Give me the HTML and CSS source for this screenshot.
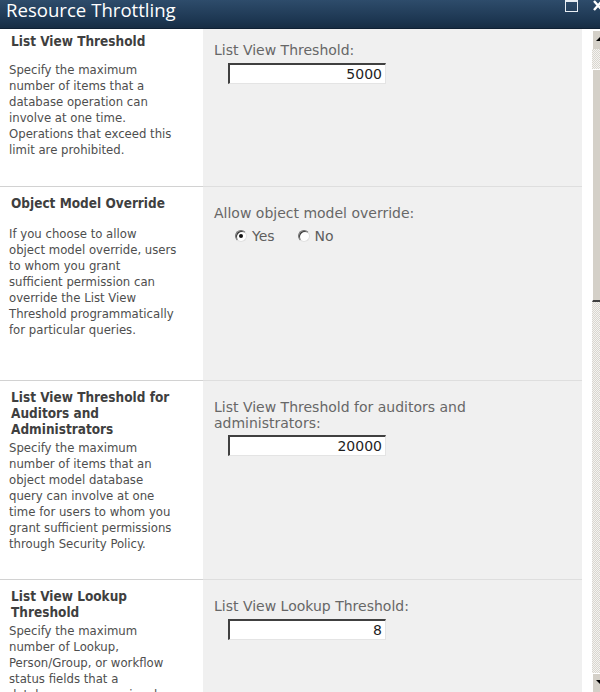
FILE: index.html
```html
<!DOCTYPE html>
<html>
<head>
<meta charset="utf-8">
<link rel="stylesheet" href="styles.css">
</head>
<body>
<div class="window">
  <div class="titlebar">
    <span class="title">Resource Throttling</span>
    <div class="controls">
      <span class="restore"></span>
      <svg class="close" width="12" height="12" viewBox="0 0 12 12"><path d="M2 1 L10 10 M10 1 L2 10" stroke="#fff" stroke-width="2.4" fill="none"/></svg>
    </div>
  </div>
  <div class="body">
    <div class="content">
      <div class="row first r1">
        <div class="left">
          <div class="heading">List View Threshold</div>
          <div class="desc spaced">Specify the maximum<br>number of items that a<br>database operation can<br>involve at one time.<br>Operations that exceed this<br>limit are prohibited.</div>
        </div>
        <div class="right">
          <div class="label">List View Threshold:</div>
          <div class="field"><span class="input">5000</span></div>
        </div>
      </div>
      <div class="row r2">
        <div class="left">
          <div class="heading">Object Model Override</div>
          <div class="desc spaced">If you choose to allow<br>object model override, users<br>to whom you grant<br>sufficient permission can<br>override the List View<br>Threshold programmatically<br>for particular queries.</div>
        </div>
        <div class="right">
          <div class="label">Allow object model override:</div>
          <div class="radios">
            <span class="option"><span class="radio checked"></span>Yes</span>
            <span class="option"><span class="radio"></span>No</span>
          </div>
        </div>
      </div>
      <div class="row r3">
        <div class="left">
          <div class="heading">List View Threshold for<br>Auditors and<br>Administrators</div>
          <div class="desc">Specify the maximum<br>number of items that an<br>object model database<br>query can involve at one<br>time for users to whom you<br>grant sufficient permissions<br>through Security Policy.</div>
        </div>
        <div class="right">
          <div class="label">List View Threshold for auditors and<br>administrators:</div>
          <div class="field"><span class="input">20000</span></div>
        </div>
      </div>
      <div class="row r4">
        <div class="left">
          <div class="heading">List View Lookup<br>Threshold</div>
          <div class="desc">Specify the maximum<br>number of Lookup,<br>Person/Group, or workflow<br>status fields that a<br>database query can involve<br>at one time.</div>
        </div>
        <div class="right">
          <div class="label">List View Lookup Threshold:</div>
          <div class="field"><span class="input">8</span></div>
        </div>
      </div>
    </div>
    <div class="spacer"></div>
    <div class="scrollbar">
      <div class="sb-btn up"><span class="tri-up"></span></div>
      <div class="sb-track top"></div>
      <div class="sb-thumb"></div>
      <div class="sb-track bottom"></div>
      <div class="sb-btn down"><span class="tri-down"></span></div>
    </div>
  </div>
</div>
</body>
</html>
```
FILE: styles.css
```css
html, body {
  margin: 0;
  padding: 0;
  background: #ffffff;
}
.window {
  width: 600px;
  height: 692px;
  overflow: hidden;
  display: flex;
  flex-direction: column;
}
.titlebar {
  height: 29px;
  flex: none;
  background: linear-gradient(#2e4c6b, #1d3752 70%, #172d44);
  border-bottom: 1px solid #0f2033;
  display: flex;
  justify-content: space-between;
  align-items: flex-start;
  box-sizing: border-box;
}
.title {
  font-family: "Open Sans", "DejaVu Sans", sans-serif;
  font-size: 18.6px;
  line-height: 20px;
  color: #ffffff;
  padding-left: 6px;
}
.controls {
  display: flex;
  align-items: flex-start;
  gap: 14px;
  margin-right: -4px;
}
.restore {
  width: 11px;
  height: 9px;
  border: 1px solid #e8eef4;
  border-top-width: 2px;
  margin-top: 0;
  display: block;
}
.close {
  display: block;
}
.body {
  flex: 1;
  display: flex;
  min-height: 0;
}
.content {
  width: 582px;
  flex: none;
  display: flex;
  flex-direction: column;
  overflow: hidden;
}
.row {
  display: grid;
  grid-template-columns: 203px 1fr;
  flex: none;
}
.r1 { height: 157px; }
.r2 { height: 194px; }
.r3 { height: 199px; }
.r4 { height: 120px; }
.left {
  background: #ffffff;
  padding: 8px 0 0 9px;
  border-top: 1px solid #d2d2d2;
  box-sizing: border-box;
  overflow: hidden;
}
.right {
  background: #f0f0f0;
  padding: 18px 0 0 11px;
  border-top: 1px solid #dedede;
  box-sizing: border-box;
}
.first .left { padding-top: 4px; border-top: 0; }
.first .right { padding-top: 13px; border-top: 0; }
.heading {
  font-family: "DejaVu Sans Condensed", "DejaVu Sans", sans-serif;
  font-weight: bold;
  font-size: 13.5px;
  line-height: 16px;
  color: #3f3f3f;
  padding-left: 2px;
}
.desc {
  font-family: "DejaVu Sans Condensed", "DejaVu Sans", sans-serif;
  font-size: 13px;
  line-height: 16px;
  color: #4e4e4e;
  margin-top: 3px;
  white-space: nowrap;
}
.desc.spaced { margin-top: 13px; }
.r2 .desc.spaced { margin-top: 15px; }
.label {
  font-family: "DejaVu Sans", Verdana, sans-serif;
  font-size: 14px;
  line-height: 16px;
  color: #676767;
  white-space: nowrap;
}
.field {
  padding: 5px 0 0 14px;
}
.r3 .field { padding-top: 4px; }
.input {
  display: block;
  width: 158px;
  height: 21px;
  box-sizing: border-box;
  background: #ffffff;
  border-style: solid;
  border-width: 2px 1px 1px 2px;
  border-color: #404040 #e4e4e4 #e4e4e4 #404040;
  font-family: "DejaVu Sans", Verdana, sans-serif;
  font-size: 14px;
  line-height: 18px;
  color: #1e1e1e;
  text-align: right;
  padding-right: 3px;
}
.radios {
  display: flex;
  gap: 23px;
  padding: 7px 0 0 21px;
  font-family: "DejaVu Sans", Verdana, sans-serif;
  font-size: 14px;
  line-height: 16px;
  color: #5e5e5e;
}
.option {
  display: flex;
  align-items: center;
  gap: 5px;
}
.radio {
  width: 12px;
  height: 12px;
  border-radius: 50%;
  box-sizing: border-box;
  background: #ffffff;
  border: 1px solid;
  border-color: #6f6f6f #e0e0e0 #e0e0e0 #6f6f6f;
  box-shadow: inset 1px 1px 0 #3a3a3a;
  display: flex;
  align-items: center;
  justify-content: center;
}
.radio.checked::after {
  content: "";
  width: 4px;
  height: 4px;
  border-radius: 50%;
  background: #111111;
}
.spacer {
  width: 10px;
  flex: none;
  background: #ffffff;
}
.scrollbar {
  width: 8px;
  flex: none;
  display: flex;
  flex-direction: column;
  overflow: hidden;
}
.sb-btn {
  height: 19px;
  flex: none;
  background: #d4d0c8;
  border-top: 1px solid #ffffff;
  border-left: 1px solid #ffffff;
  box-sizing: border-box;
  position: relative;
  width: 16px;
}
.sb-btn.up { margin-top: 1px; }
.tri-up {
  position: absolute;
  left: 3px;
  top: 6px;
  border-left: 4px solid transparent;
  border-right: 4px solid transparent;
  border-bottom: 4px solid #000;
}
.tri-down {
  position: absolute;
  left: 3px;
  top: 6px;
  border-left: 4px solid transparent;
  border-right: 4px solid transparent;
  border-top: 4px solid #000;
}
.sb-track {
  background-color: #f4f3f0;
  background-image:
    linear-gradient(45deg, #d9d6cf 25%, transparent 25%, transparent 75%, #d9d6cf 75%),
    linear-gradient(45deg, #d9d6cf 25%, transparent 25%, transparent 75%, #d9d6cf 75%);
  background-size: 2px 2px;
  background-position: 0 0, 1px 1px;
  width: 16px;
}
.sb-track.top { height: 20px; flex: none; }
.sb-track.bottom { flex: 1; }
.sb-thumb {
  height: 233px;
  flex: none;
  width: 16px;
  background: #d4d0c8;
  border-left: 1px solid #ffffff;
  border-top: 1px solid #ffffff;
  border-bottom: 2px solid #404040;
  box-sizing: border-box;
}
```
